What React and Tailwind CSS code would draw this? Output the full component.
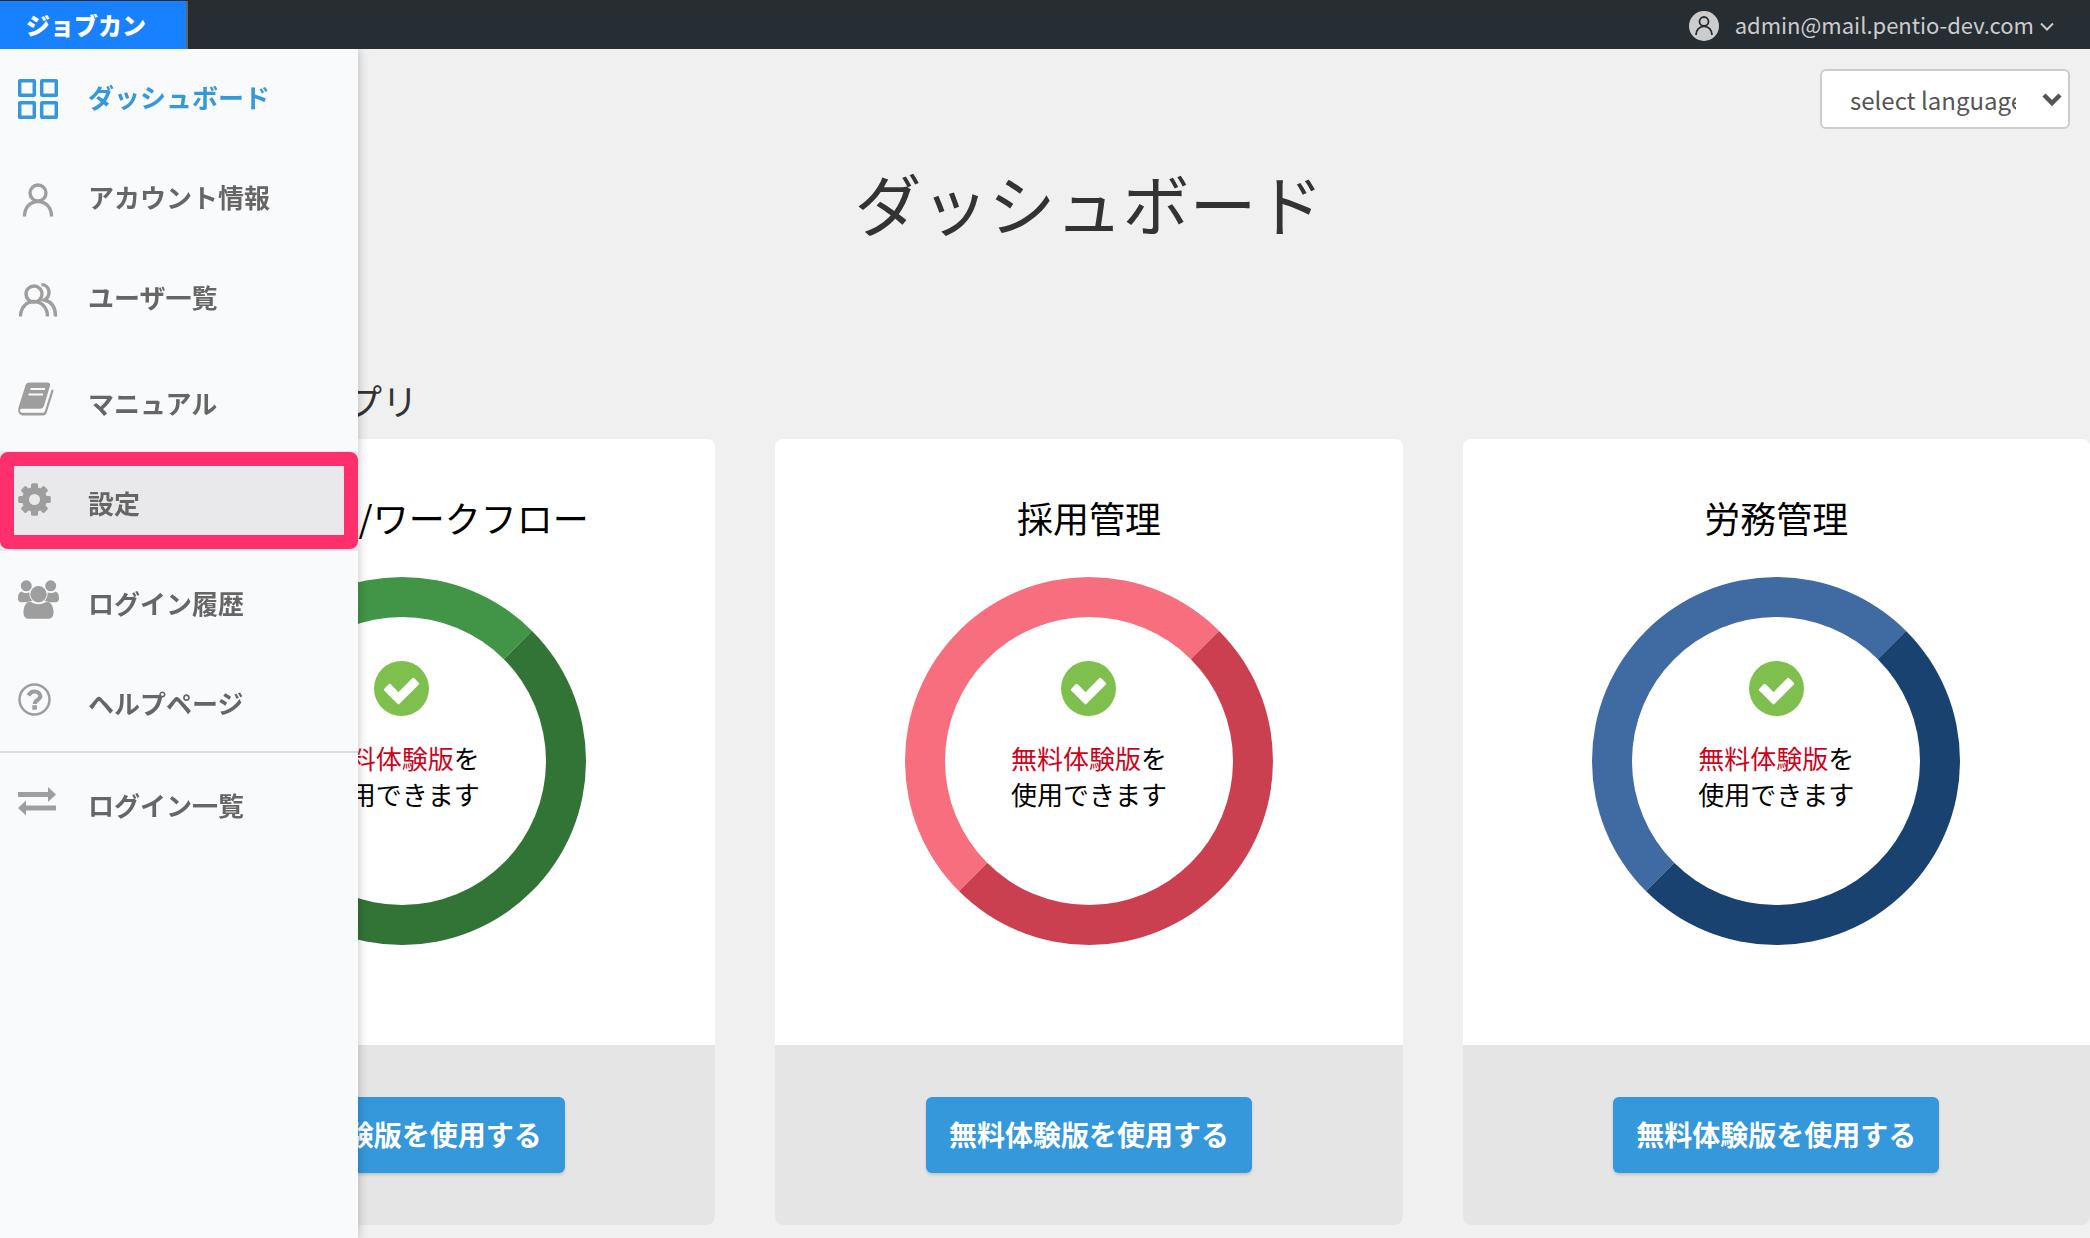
import React from 'react';
import clsx from 'clsx';

function GridIcon() {
  return (
    <svg width="40" height="40" viewBox="0 0 40 40" fill="none" stroke="currentColor" strokeWidth="3.500" strokeLinejoin="round">
      <rect x="1.7" y="1.700" width="14.600" height="14.600" rx="0.5" />
      <rect x="23.7" y="1.700" width="14.600" height="14.600" rx="0.5" />
      <rect x="1.7" y="23.700" width="14.600" height="14.600" rx="0.5" />
      <rect x="23.7" y="23.700" width="14.600" height="14.600" rx="0.5" />
    </svg>
  );
}

function UserIcon() {
  return (
    <svg width="40" height="40" viewBox="0 0 40 40" fill="none" stroke="currentColor" strokeWidth="3.400">
      <circle cx="20" cy="14" r="8" />
      <path d="M6.500 37.500c0-9 5.500-15 13.500-15s13.500 6 13.500 15" />
    </svg>
  );
}

function UsersIcon() {
  return (
    <svg width="40" height="40" viewBox="0 0 40 40" fill="none" stroke="currentColor" strokeWidth="3.400">
      <circle cx="16" cy="15" r="8" />
      <path d="M2.500 37.500c0-8.500 5.500-15 13.500-15s13.500 6.500 13.500 15" />
      <path d="M23.500 5.500c4.500.3 7.500 3.500 7.500 8 0 3.500-1.800 5.800-4.500 7.500 6.500 1.500 11 7 11 16.500" />
    </svg>
  );
}

function BookIcon() {
  return (
    <svg width="36" height="34" viewBox="0 0 36 34">
      <path fill="currentColor" d="M11.500 0.500h18c2 0 3 1.500 2.500 3.300l-6 20c-.6 2-1.800 3-3.800 3H3.500c-1.500 0-2 1-1.500 2.200.5 1.300 1.600 1.800 3 1.800h19.500c1.200 0 2-.6 2.400-1.800L33.500 8l1.800-.5c.3.600.3 1.200.1 2L28.600 31c-.6 1.600-1.800 2.500-3.500 2.500H5.500C2 33.500 0 31 .2 27.500c0-1 .4-2.300.8-3.500L7.500 3.500C8 1.700 9.500.5 11.500.5z" />
      <path fill="none" stroke="#f9fafc" strokeWidth="2" d="M12.500 7h14.500M10.500 12.500H25" />
    </svg>
  );
}

function GearIcon() {
  const teeth = [0, 45, 90, 135];
  return (
    <svg width="33" height="33" viewBox="-16.500 -16.500 33 33" fill="currentColor">
      {teeth.map((angle) => (
        <rect key={angle} x="-3.500" y="-16.300" width="7" height="32.600" rx="1.500" transform={`rotate(${angle})`} />
      ))}
      <circle r="12.500" />
      <circle r="5.500" fill="#e9e9eb" />
    </svg>
  );
}

function GroupIcon() {
  return (
    <svg width="41" height="39" viewBox="0 0 41 39" fill="currentColor">
      <circle cx="8.300" cy="5.800" r="5.500" />
      <circle cx="32.700" cy="5.800" r="5.500" />
      <path d="M3.500 11.500c1.500 1 3 1.500 4.800 1.500 1.200 0 2.200-.2 3-.5 0 4 1.200 6.300 3.200 8.300-2 .2-3.700.7-5 1.400H3.500C1 22.200 0 20.700 0 18.500c0-3.500.8-6 3.500-7z" />
      <path d="M37.500 11.500c-1.500 1-3 1.500-4.800 1.500-1.200 0-2.200-.2-3-.5 0 4-1.200 6.300-3.200 8.300 2 .2 3.700.7 5 1.400h6c2.500 0 3.500-1.500 3.500-3.700 0-3.500-.8-6-3.500-7z" />
      <circle cx="20.500" cy="14.200" r="8.200" />
      <path d="M12.500 21.500c2.300 1.800 5 2.700 8 2.700s5.700-.9 8-2.700c4.500.3 7 4.500 7 11 0 4-2 6.300-5.500 6.300H11c-3.500 0-5.500-2.300-5.500-6.300 0-6.500 2.500-10.700 7-11z" />
    </svg>
  );
}

function HelpIcon() {
  return (
    <svg width="33" height="33" viewBox="0 0 33 33" fill="none" stroke="currentColor">
      <circle cx="16.500" cy="16.500" r="15" strokeWidth="2.500" />
      <path strokeWidth="4.200" d="M10.500 12.500c1.200-2.600 3.300-4 6-4 3.300 0 5.800 1.900 5.800 4.600 0 3.900-5.500 3.700-5.500 8" />
      <path strokeWidth="4.500" d="M14.300 24.500h4.600" />
    </svg>
  );
}

function SwapIcon() {
  return (
    <svg width="38" height="30" viewBox="0 0 38 30" fill="currentColor">
      <path d="M0 6h30V1l8 7.500-8 7.500v-5H0z" />
      <path d="M38 19.500H8v-5L0 22l8 7.500v-5h30z" />
    </svg>
  );
}

const NAV_ITEMS = [
  { label: 'ダッシュボード', icon: GridIcon, outline: true, active: true },
  { label: 'アカウント情報', icon: UserIcon, outline: true },
  { label: 'ユーザ一覧', icon: UsersIcon, outline: true },
  { label: 'マニュアル', icon: BookIcon },
  { label: '設定', icon: GearIcon, highlighted: true },
  { label: 'ログイン履歴', icon: GroupIcon },
  { label: 'ヘルプページ', icon: HelpIcon },
  { label: 'ログイン一覧', icon: SwapIcon, divided: true },
];

const APPS = [
  { name: '経費精算/ワークフロー', ring: 'border-t-[#429546] border-l-[#429546] border-r-[#317436] border-b-[#317436]' },
  { name: '採用管理', ring: 'border-t-[#f76e7e] border-l-[#f76e7e] border-r-[#ca4050] border-b-[#ca4050]' },
  { name: '労務管理', ring: 'border-t-[#406aa2] border-l-[#406aa2] border-r-[#194271] border-b-[#194271]' },
];

function NavItem({ item }) {
  const Icon = item.icon;
  return (
    <li className={clsx(item.divided && 'border-t-2 border-[#dcdcde]')}>
      <a
        href="#"
        className={clsx(
          'relative flex h-[100px] items-center pl-[18px] text-[26px] font-bold',
          item.active ? 'text-[#3498db]' : 'text-[#666]',
          item.highlighted && 'bg-[#e9e9eb]'
        )}
      >
        <span className={clsx('flex w-[70px] pb-1', !item.active && 'text-[#9e9e9e]')}>
          <Icon />
        </span>
        <span className={item.outline ? 'pb-2.5' : 'pt-0.5'}>{item.label}</span>
        {item.highlighted && (
          <span className="absolute inset-x-0 bottom-0.5 top-px rounded-lg border-[14px] border-[#ff2f6e]" />
        )}
      </a>
    </li>
  );
}

function Sidebar() {
  return (
    <nav className="fixed bottom-0 left-0 top-[49px] z-10 w-[358px] bg-[#f9fafc] pt-0.5 shadow-[0_0_10px_rgba(0,0,0,0.25)]">
      <ul>
        {NAV_ITEMS.map((item) => (
          <NavItem key={item.label} item={item} />
        ))}
      </ul>
    </nav>
  );
}

function Header() {
  return (
    <header className="relative z-20 flex h-[49px] items-stretch justify-between border-t border-[#2b2b2b] bg-[#262e34]">
      <a
        href="#"
        className="flex w-[188px] items-center border-r-2 border-[#666] bg-[#1881ff] pl-[26px] text-2xl leading-none font-black text-white"
      >
        ジョブカン
      </a>
      <button type="button" className="flex items-center pr-9 pb-0.5 text-[22px] text-[#ccc]">
        <svg width="30" height="30" viewBox="0 0 30 30" className="mt-1 mr-4">
          <circle cx="15" cy="15" r="15" fill="#ccc" />
          <g fill="none" stroke="#262e34" strokeWidth="1.800">
            <circle cx="15" cy="10.500" r="4.500" />
            <path d="M7 24c0-5 3.200-8.700 8-8.700s8 3.700 8 8.700" />
          </g>
        </svg>
        admin@mail.pentio-dev.com
        <svg width="14" height="9" viewBox="0 0 14 9" className="mt-1 ml-1.5" fill="none" stroke="currentColor" strokeWidth="2">
          <path d="M1 1.500l6 6 6-6" />
        </svg>
      </button>
    </header>
  );
}

function LanguageSelect() {
  return (
    <div className="relative w-[250px]">
      <select
        aria-label="select language"
        className="h-[60px] w-full appearance-none rounded-md border-2 border-[#ccc] bg-white pt-0.5 pr-[52px] pl-7 text-2xl text-[#555]"
      >
        <option>select language</option>
      </select>
      <svg width="20" height="14" viewBox="0 0 20 14" className="pointer-events-none absolute right-2 top-6" fill="none" stroke="#555" strokeWidth="4.500">
        <path d="M2 2l8 8 8-8" />
      </svg>
    </div>
  );
}

function CheckIcon() {
  return (
    <svg width="55" height="55" viewBox="-27.500 -27.500 55 55">
      <circle r="27.500" fill="#7fbf4d" />
      <path
        d="M-16.100 1.200L-3 14.300 16.100-4.800 11.800-9.100-3 5.700-11.800-3.100z"
        fill="#fff"
        stroke="#fff"
        strokeWidth="3"
        strokeLinejoin="round"
      />
    </svg>
  );
}

function AppCard({ app }) {
  return (
    <article className="overflow-hidden rounded-lg bg-white">
      <div className="flex h-[606px] flex-col items-center pt-[51px]">
        <h3 className="mb-[33px] text-4xl leading-[54px] text-black">{app.name}</h3>
        <div className={clsx('flex size-[368px] flex-col items-center rounded-full border-[40px] pt-11', app.ring)}>
          <CheckIcon />
          <p className="mt-6 text-[26px] leading-9 text-black">
            <span className="text-[#d0021b]">無料体験版</span>を
            <br />
            使用できます
          </p>
        </div>
      </div>
      <div className="flex h-[180px] items-center justify-center bg-[#e5e5e5]">
        <button
          type="button"
          className="h-[76px] w-[326px] rounded-md bg-[#3498db] pb-0.5 text-[28px] font-bold text-white shadow-[0_2px_3px_rgba(0,0,0,0.15)]"
        >
          無料体験版を使用する
        </button>
      </div>
    </article>
  );
}

export default function App() {
  return (
    <div className="min-h-screen bg-[#f0f0f0] font-['Noto_Sans_CJK_JP',sans-serif]">
      <Header />
      <Sidebar />
      <main className="pl-[88px]">
        <div className="flex justify-end pt-5 pr-5">
          <LanguageSelect />
        </div>
        <h1 className="mt-[23px] text-center text-[67px] leading-[100px] text-[#333]">ダッシュボード</h1>
        <h2 className="mt-[122px] pl-[222px] text-4xl leading-[52px] text-[#333]">アプリ</h2>
        <section className="mt-[13px] grid grid-cols-3 gap-[60px]">
          {APPS.map((app) => (
            <AppCard key={app.name} app={app} />
          ))}
        </section>
      </main>
    </div>
  );
}
